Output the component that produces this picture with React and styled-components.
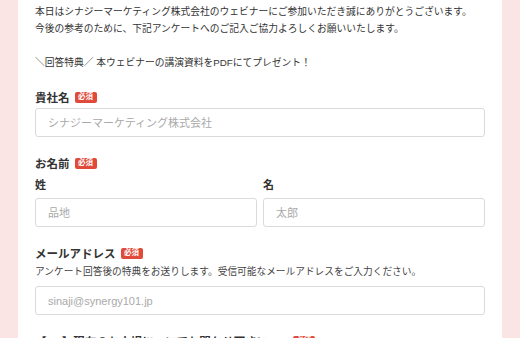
import React from "react";
import styled, { createGlobalStyle } from "styled-components";

const Global = createGlobalStyle`
  html, body { margin: 0; padding: 0; }
  body {
    background: #fbe4e4;
    font-family: "Liberation Sans", "Noto Sans CJK JP", sans-serif;
    color: #333;
    overflow: hidden;
  }
`;

const Page = styled.div`
  padding: 0 18px;
  min-height: 338px;
`;
const Card = styled.div`
  background: #fff;
  padding: 2.5px 17px 40px;
  min-height: 338px;
  box-sizing: border-box;
`;
const Intro = styled.p`
  margin: 0;
  font-size: 9.75px;
  line-height: 17px;
  color: #333;
`;
const Field = styled.div`
  margin-top: ${(p) => (p.$first ? "17.5px" : "17px")};
`;
const Label = styled.div`
  display: flex;
  align-items: center;
  gap: 5px;
  height: 18px;
  font-size: 11.5px;
  font-weight: 700;
  color: #333;
  margin-bottom: ${(p) => p.$mb || "2px"};
`;
const Badge = styled.span`
  display: inline-flex;
  align-items: center;
  justify-content: center;
  width: 22px;
  height: 11px;
  border-radius: 2px;
  background: #df4a3b;
  color: #fff;
  font-size: 7.5px;
  font-weight: 700;
  line-height: 1;
  margin-left: ${(p) => p.$ml || "0"};
`;
const SubLabel = styled.div`
  font-size: 11px;
  font-weight: 700;
  line-height: 18px;
  margin-bottom: 4px;
`;
const Help = styled.div`
  font-size: 9.7px;
  line-height: 16px;
  color: #444;
  margin-bottom: 6px;
`;
const Input = styled.input`
  display: block;
  width: 100%;
  box-sizing: border-box;
  height: 29px;
  padding: 0 12px;
  border: 1px solid #dadada;
  border-radius: 3px;
  background: #fff;
  font-family: "Liberation Sans", "Noto Sans CJK JP", sans-serif;
  font-size: 11px;
  color: #333;
  outline: none;
  &::placeholder { color: #a9a9a9; }
`;
const NameRow = styled.div`
  display: grid;
  grid-template-columns: 1fr 1fr;
  gap: 6px;
`;

export default function App() {
  return (
    <Page>
      <Global />
      <Card>
        <Intro>
          本日はシナジーマーケティング株式会社のウェビナーにご参加いただき誠にありがとうございます。
          <br />
          今後の参考のために、下記アンケートへのご記入ご協力よろしくお願いいたします。
          <br />
          <br />
          ＼回答特典／ 本ウェビナーの講演資料をPDFにてプレゼント！
        </Intro>

        <Field $first>
          <Label>
            貴社名<Badge>必須</Badge>
          </Label>
          <Input placeholder="シナジーマーケティング株式会社" />
        </Field>

        <Field>
          <Label $mb="4px">
            お名前<Badge>必須</Badge>
          </Label>
          <NameRow>
            <div>
              <SubLabel>姓</SubLabel>
              <Input placeholder="品地" />
            </div>
            <div>
              <SubLabel>名</SubLabel>
              <Input placeholder="太郎" />
            </div>
          </NameRow>
        </Field>

        <Field>
          <Label>
            メールアドレス<Badge>必須</Badge>
          </Label>
          <Help>アンケート回答後の特典をお送りします。受信可能なメールアドレスをご入力ください。</Help>
          <Input placeholder="sinaji@synergy101.jp" />
        </Field>

        <Field>
          <Label>
            【Q1】現在のお立場についてお聞かせ下さい。<Badge $ml="8px">必須</Badge>
          </Label>
        </Field>
      </Card>
    </Page>
  );
}
